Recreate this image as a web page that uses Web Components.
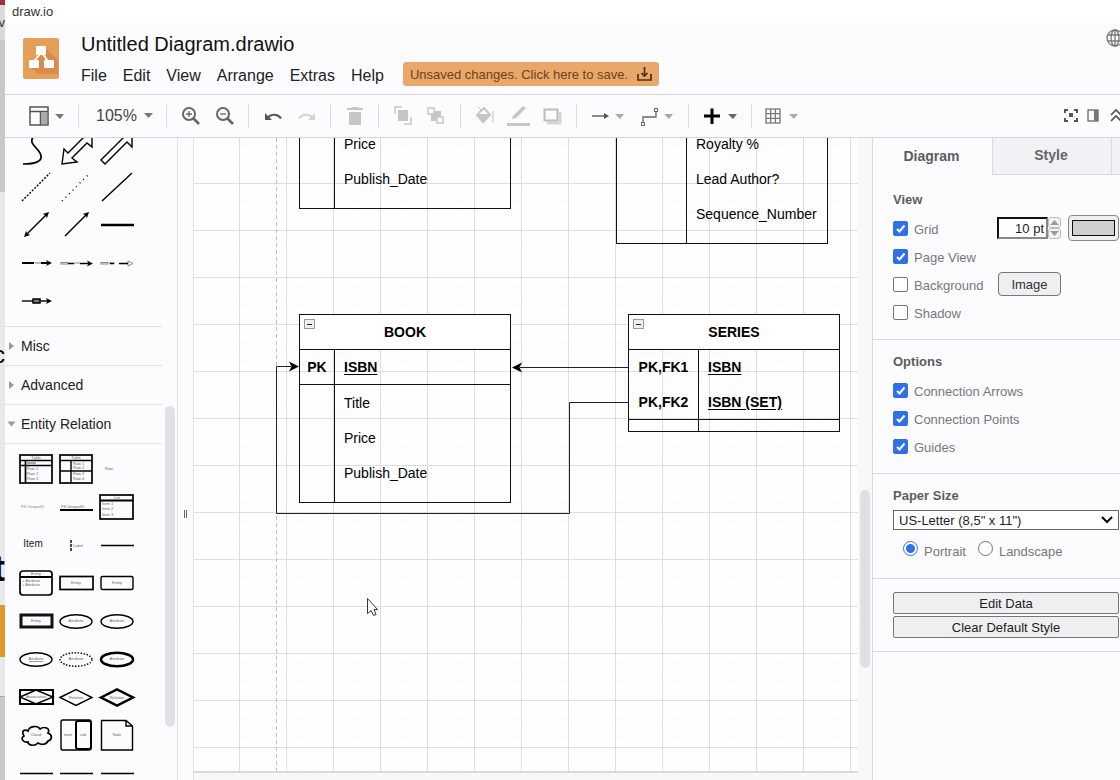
<!DOCTYPE html>
<html lang="en">
<head>
<meta charset="utf-8">
<title>draw.io</title>
<style>
html, body { margin: 0; height: 100%; overflow: hidden; }
body { font-family: "Liberation Sans", Arial, sans-serif; color: #111; background: #fcfcfe; }
</style>
</head>
<body>
<draw-app></draw-app>
<script>
const define = (name, html, setup) => customElements.define(name, class extends HTMLElement {
  constructor() {
    super();
    const t = document.createElement('template');
    t.innerHTML = '<style>*{box-sizing:border-box}button{font:inherit;color:inherit;cursor:pointer}svg{display:block}</style>' +
      (typeof html === 'function' ? html(this) : html);
    this.attachShadow({ mode: 'open' }).appendChild(t.content.cloneNode(true));
    if (setup) setup(this, this.shadowRoot);
  }
});

/* ---------- window behind the app ---------- */
define('back-window', `
<style>
:host { display: flex; flex-direction: column; overflow: hidden; background: #c9c9cb; color: #000; }
div { flex: none; overflow: hidden; white-space: nowrap; direction: rtl; }
.red { height: 5px; background: #99323d; }
.tab { height: 35px; background: #ddd8d6; font-size: 13px; line-height: 36px; color: #333; }
.bar { height: 152px; background: #c9c9cb; }
.page { height: 413px; background: #e9e8eb; }
.page .c { font-size: 24px; line-height: 22px; padding-top: 152px; }
.page .t { font-size: 36px; font-weight: bold; line-height: 40px; padding-top: 183px; }
.cta { height: 52px; background: #e0962a; }
.low { height: 40px; background: #e9e8eb; border-bottom: 1px solid #aaa; }
</style>
<div class="red"></div><div class="tab">v</div><div class="bar"></div>
<div class="page"><div class="c">c</div><div class="t">t</div></div>
<div class="cta"></div><div class="low"></div>`);

/* ---------- header ---------- */
define('app-header', `
<style>
:host { display: block; border-bottom: 1px solid #d6d6da; }
.win { height: 23px; padding-left: 7px; font-size: 13px; line-height: 23px; background: #fff; color: #333; }
.row { display: flex; height: 71px; padding: 9px 0 0 18px; }
.logo { margin-top: 6px; width: 37px; height: 41px; }
.main { flex: 1; margin-left: 21px; }
h1 { margin: 0; font-size: 20px; font-weight: normal; line-height: 24px; }
nav { display: flex; align-items: center; gap: 16px; height: 24px; margin-top: 8px; font-size: 16px; }
nav a { color: #222; text-decoration: none; }
button { display: flex; align-items: center; gap: 9px; height: 24px; margin: -4px 0 0 3px; padding: 0 7px; border: 0; border-radius: 3px; background: #e9a869; color: #6b4320; font-size: 13px; }
.globe { width: 14px; height: 20px; overflow: hidden; margin-top: -4px; }
</style>
<div class="win">draw.io</div>
<div class="row">
  <svg class="logo" viewBox="0 0 37 41"><rect width="36" height="41" rx="2" fill="#e69f59"/><path d="M22 10 L35 22 V36 H15 L7 29 Z" fill="#d98a4e"/>
  <path d="M17 16 L10 25 M20 16 L26 25" stroke="#fff" stroke-width="2"/><g fill="#fff"><rect x="13" y="8" width="10" height="9" rx="1"/><rect x="6" y="22" width="10" height="8" rx="1"/><rect x="21" y="22" width="10" height="8" rx="1"/></g></svg>
  <div class="main">
    <h1>Untitled Diagram.drawio</h1>
    <nav><a href="#">File</a><a href="#">Edit</a><a href="#">View</a><a href="#">Arrange</a><a href="#">Extras</a><a href="#">Help</a>
      <button>Unsaved changes. Click here to save.
        <svg width="15" height="15" viewBox="0 0 15 15" fill="none" stroke="#4d3018" stroke-width="2"><path d="M1 7 V13 H14 V7 M7.500 0 V9 M4.500 6 L7.500 9 L10.500 6" stroke-width="1.700"/></svg></button>
    </nav>
  </div>
  <svg class="globe" viewBox="0 0 14 20" fill="none" stroke="#777" stroke-width="1.300"><circle cx="9" cy="10" r="8"/><ellipse cx="9" cy="10" rx="4" ry="8"/><path d="M1.500 7 H16 M1.500 13 H16 M9 2 V18"/></svg>
</div>`);

/* ---------- toolbar ---------- */
const caret = (c, x = 36) => `<path d="M${x - 5} 15 H${x + 4} L${x} 20 Z" fill="${c}" stroke="none"/>`;
const tools = {
  layout: [49, `<g stroke="#555" stroke-width="1.500"><rect x="8" y="8" width="18" height="18"/><path d="M8 12.500 H26 M18.500 12.500 V26"/></g><rect x="19" y="13" width="6" height="12" fill="#aaa"/>` + caret('#777', 38)],
  zoomin: [34, `<g stroke="#666" stroke-width="2"><circle cx="16" cy="15" r="6"/><path d="M20.500 19.500 L26 25" stroke-width="2.600"/><path d="M13 15 H19 M16 12 V18" stroke-width="1.300"/></g>`],
  zoomout: [34, `<g stroke="#666" stroke-width="2"><circle cx="16" cy="15" r="6"/><path d="M20.500 19.500 L26 25" stroke-width="2.600"/><path d="M13 15 H19" stroke-width="1.300"/></g>`],
  undo: [34, `<path d="M10 14 V21 H17 L14.500 18.500 C17 16 22 16 25 20 L27 19 C24 14 17 13.500 13 17 Z" fill="#555"/>`],
  redo: [34, `<path d="M26 14 V21 H19 L21.500 18.500 C19 16 14 16 11 20 L9 19 C12 14 19 13.500 23 17 Z" fill="#d2d2d4"/>`],
  trash: [34, `<path d="M10 9 H14 L15 8 H21 L22 9 H26 V11 H10 Z M12 13 H24 V26 H12 Z" fill="#c6c6c8"/>`],
  front: [34, `<g stroke="#c6c6c8" stroke-width="1.500"><path d="M10 15 V8 H17 M26 18 V25 H19"/></g><rect x="13" y="11" width="10" height="11" fill="#c6c6c8"/>`],
  back: [34, `<rect x="12" y="12" width="10" height="10" fill="#c6c6c8"/><g stroke="#c6c6c8" stroke-width="1.500" fill="#fcfcfe"><rect x="9" y="9" width="6" height="6"/><rect x="18" y="18" width="6" height="6"/></g>`],
  fill: [34, `<path d="M11 8 L15 12 M17 8 L24 16 L16 24 L9 16 Z" fill="#c6c6c8" stroke="#c6c6c8"/><path d="M12 15 L17 10.500 L21 15 Z" fill="#fcfcfe"/><path d="M26 12 V24" stroke="#dedee0" stroke-width="2"/>`],
  line: [34, `<path d="M12 17 L22 7 L25 9 L15 19 L11 20 Z" fill="#c6c6c8"/><path d="M6 25.500 H29" stroke="#c6c6c8" stroke-width="3"/>`],
  shadow: [34, `<path d="M12 24 H25 V13" stroke="#d6d6d8" stroke-width="3"/><rect x="9.500" y="10.500" width="13" height="11" stroke="#bdbdbf" stroke-width="2" fill="#fcfcfe"/>`],
  arrow: [49, `<path d="M9 17 H23" stroke="#666" stroke-width="1.500"/><path d="M21 14 L26 17 L21 20 Z" fill="#555"/>` + caret('#aaa', 37)],
  route: [49, `<path d="M11 24 V18 H24 V13" stroke="#666" stroke-width="1.300"/><g stroke="#666" fill="#fff"><rect x="9.500" y="23.500" width="3" height="3"/><rect x="22.500" y="9.500" width="3" height="3"/></g>` + caret('#aaa', 37)],
  plus: [49, `<path d="M9 17 H25 M17 9.500 V25" stroke="#000" stroke-width="3"/>` + caret('#666', 38)],
  table: [49, `<g stroke="#777" stroke-width="1.300"><rect x="8" y="10" width="14" height="14"/><path d="M12.700 10 V24 M17.400 10 V24 M8 14.700 H22 M8 19.400 H22"/></g>` + caret('#aaa', 36)],
  full: [22, `<g stroke="#555" stroke-width="2"><path d="M5 14 V11 H8 M14 11 H17 V14 M17 19 V22 H14 M8 22 H5 V19"/></g><rect x="9" y="14" width="4" height="4" fill="#555"/>`],
  panel: [22, `<rect x="6" y="11" width="10" height="11" stroke="#666" stroke-width="1.300"/><rect x="12" y="11" width="4" height="11" fill="#777"/>`],
  fold: [22, `<path d="M7 16 L12 11 L17 16 M7 22 L12 17 L17 22" stroke="#555" stroke-width="1.700"/>`]
};
define('tool-button', el => {
  const k = el.getAttribute('icon'), [w, art] = tools[k];
  return `<style>:host{display:block;flex:none}button{display:block;border:0;padding:0;background:none}</style>
  <button aria-label="${k}"><svg width="${w}" height="34" viewBox="0 0 ${w} 34" fill="none">${art}</svg></button>`;
});
define('tool-group', `<style>
:host { display: flex; flex: none; align-items: center; padding: 0 7px 0 6px; height: 22px; border-right: 1px solid #dcdce0; }
:host(.last) { border: 0; }
</style><slot></slot>`);
define('tool-bar', `
<style>
:host { display: flex; align-items: center; height: 43px; padding-left: 11px; border-bottom: 1px solid #d6d6da; overflow: hidden; }
.zoom { display: flex; align-items: center; gap: 7px; border: 0; background: none; padding: 0 8px 0 11px; font-size: 16px; width: 74px; color: #444; white-space: nowrap; }
.zoom svg { flex: none; }
.end { display: flex; margin-left: auto; margin-right: -6px; flex: none; }
</style>
<tool-group><tool-button icon="layout"></tool-button></tool-group>
<tool-group><button class="zoom">105% <svg width="10" height="6"><path d="M0 0 H9 L4.500 5 Z" fill="#777"/></svg></button></tool-group>
<tool-group><tool-button icon="zoomin"></tool-button><tool-button icon="zoomout"></tool-button></tool-group>
<tool-group><tool-button icon="undo"></tool-button><tool-button icon="redo"></tool-button></tool-group>
<tool-group><tool-button icon="trash"></tool-button></tool-group>
<tool-group><tool-button icon="front"></tool-button><tool-button icon="back"></tool-button></tool-group>
<tool-group><tool-button icon="fill"></tool-button><tool-button icon="line"></tool-button><tool-button icon="shadow"></tool-button></tool-group>
<tool-group><tool-button icon="arrow"></tool-button><tool-button icon="route"></tool-button></tool-group>
<tool-group><tool-button icon="plus"></tool-button></tool-group>
<tool-group class="last"><tool-button icon="table"></tool-button></tool-group>
<div class="end"><tool-button icon="full"></tool-button><tool-button icon="panel"></tool-button><tool-button icon="fold"></tool-button></div>`);

/* ---------- shape thumbnails, each on a 40 x 38 cell ---------- */
const tx = (x, y, s, a = 'middle') => `<text x="${x}" y="${y}" text-anchor="${a}" font-size="4" fill="#666" stroke="none">${s}</text>`;
const ell = (extra, lab = 'Attribute') => `<ellipse cx="20" cy="19.500" rx="16" ry="6.700" ${extra}/>` + tx(20, 20, lab);
const head = (x, y, r) => `<path d="M0 0 L-6 -3 L-4.500 0 L-6 3 Z" transform="translate(${x} ${y}) rotate(${r})" fill="#000" stroke="none"/>`;
const shapes = {
  curve: `<path d="M17 8 C12 16 24 19 25 27 C26 32 20 35 7 35" stroke-width="1.700"/>`,
  biarrow: `<path d="M6 35 L8 20 L12 24 L28 8 L25 5 L36 1 V18 L31 14 L16 29 L21 33 Z"/>`,
  bigarrow: `<path d="M4 31 L26 9 L23 6 L35 1 V18 L30 13 L8 35 Z"/>`,
  dashed: `<path d="M6 34 L34 6" stroke-dasharray="2 1.500"/>`,
  dotted: `<path d="M6 34 L34 6" stroke-dasharray="1 4"/>`,
  diag: `<path d="M5 34 L35 6"/>`,
  both: `<path d="M10 30 L31 9"/>` + head(33, 7, -45) + head(8, 32, 135),
  one: `<path d="M9 31 L31 9"/>` + head(33, 7, -45),
  thick: `<path d="M4 20 H37" stroke-width="2.500"/>`,
  l1: `<path d="M6 20 H18 M25 20 H33" stroke-width="2"/><path d="M19 20 H25" stroke="#999"/>` + head(36, 20, 0),
  l2: `<rect x="5" y="19.500" width="7" height="1.500" stroke="#888" stroke-width="1"/><path d="M12 20.500 H18 M24 20.500 H33" stroke-width="1.700"/><path d="M18 20 H24" stroke="#aaa"/>` + head(37, 20.5, 0),
  l3: `<g stroke="#888" stroke-width="1"><rect x="4" y="19.500" width="7" height="1.500"/><path d="M12 20 H18 M31 18 L36 20.500 L31 23 Z"/></g><path d="M13 20.500 H17 M22 20.500 H31" stroke-width="1.700"/>`,
  l4: `<path d="M6 20 H33"/><rect x="17" y="18" width="7" height="4" fill="#777" stroke-width="1.500"/>` + head(36, 20, 0),
  t1: `<rect x="4" y="5" width="32" height="28" stroke-width="1.700"/><path d="M4 10.500 H36 M4 15.500 H36 M9.500 10.500 V33" stroke-width="1.700"/>` + tx(20, 9, 'Table') + `<path d="M11 13 H20" stroke="#555" stroke-width="1"/>` + tx(11, 20, 'Row 1', 'start') + tx(11, 25, 'Row 2', 'start') + tx(11, 30, 'Row 3', 'start'),
  t2: `<rect x="4" y="5" width="32" height="28" stroke-width="1.700"/><path d="M4 10.500 H36 M4 21 H36 M15 10.500 V33"/>` + tx(20, 9, 'Table') + tx(17, 15, 'Row 1', 'start') + tx(17, 19, 'Row 2', 'start') + tx(17, 25, 'Row 3', 'start') + tx(17, 30, 'Row 4', 'start'),
  row: tx(12, 20, 'Row', 'middle'),
  pk: tx(5, 20, 'PK UniqueID', 'start').replace('#666', '#888'),
  pkline: `<path d="M4 22 H37" stroke-width="2"/>` + tx(5, 20, 'PK UniqueID', 'start'),
  list: `<rect x="3" y="7" width="33" height="24" stroke-width="1.700"/><path d="M3 12.500 H36" stroke-width="2"/>` + tx(20, 11, 'List') + tx(5, 17, 'Item 1', 'start') + tx(5, 22, 'Item 2', 'start') + tx(5, 28, 'Item 3', 'start'),
  item: `<text x="17" y="21" text-anchor="middle" font-size="10" fill="#222" stroke="none">Item</text>`,
  vlabel: `<path d="M15 14 V26" stroke-dasharray="3 1"/>` + tx(17, 21, 'Label', 'start'),
  hline: `<path d="M4 19.500 H37" stroke-width="1.700"/>`,
  ent1: `<rect x="4" y="7" width="32" height="24" rx="3" stroke-width="1.700"/><path d="M4 13 H36" stroke-width="2"/>` + tx(20, 11, 'Entity') + tx(6, 18, '+ Attribute', 'start') + tx(6, 22, '+ Attribute', 'start'),
  ent2: `<rect x="4" y="12.500" width="33" height="13" stroke-width="1.700"/>` + tx(20, 20, 'Entity'),
  ent3: `<rect x="4" y="12.500" width="32" height="13" rx="1.500"/>` + tx(20, 20, 'Entity'),
  weak: `<rect x="5" y="13" width="31" height="12" stroke-width="3" stroke="#111"/>` + tx(20, 20, 'Entity'),
  a1: ell(''), a2: ell('') + `<path d="M13 21.500 H27" stroke="#999" stroke-width="1"/>`,
  a3: ell('stroke-dasharray="1.500 1.500"'), a4: ell('stroke-width="2.500"'),
  rel1: `<rect x="4" y="12" width="33" height="14" stroke-width="2"/><path d="M4 19 L20 12 L37 19 L20 26 Z"/>` + tx(20, 20, 'Associative'),
  rel2: `<path d="M4 19.500 L20 11.500 L36 19.500 L20 27.500 Z"/>` + tx(20, 21, 'Relation'),
  rel3: `<path d="M4 19.500 L20 11.500 L36 19.500 L20 27.500 Z" stroke-width="2.500"/>` + tx(20, 21, 'Relation'),
  cloud: `<path d="M12 15 C13 10 22 9 24 13 C28 10 35 12 32 17 C37 19 36 24 32 25 C30 29 25 29 22 27 C18 31 12 29 12 26 C7 27 4 22 8 20 C5 15 8 13 12 15 Z" stroke-width="1.700"/>` + tx(20, 20, 'Cloud'),
  split: `<rect x="5" y="4" width="30" height="30" rx="2"/><rect x="20" y="5" width="15" height="28" rx="2" stroke-width="2"/>` + tx(12, 20, 'main') + tx(27, 20, 'sub'),
  note: `<path d="M4.500 4.500 H29 L35.500 10 V34 H4.500 Z M29 4.500 V10 H35"/>` + tx(20, 20, 'Note')
};
define('shape-thumb', el => `<style>:host{display:block;height:38px}button{display:block;border:0;padding:0;background:none}</style>
<button aria-label="${el.getAttribute('kind')}"><svg width="40" height="38" viewBox="0 0 40 38" fill="none" stroke="#000" stroke-width="1.400" font-family="Liberation Sans, sans-serif">${shapes[el.getAttribute('kind')]}</svg></button>`);
const thumbs = list => list.split(' ').map(k => `<shape-thumb kind="${k}"></shape-thumb>`).join('');

define('shape-section', el => `
<style>
:host { display: block; border-bottom: 1px solid #e2e2e5; width: 157px; }
button { display: flex; align-items: center; gap: 6px; width: 100%; height: 38px; border: 0; background: none; padding: 0 0 0 3px; font-size: 14px; text-align: left; color: #222; white-space: nowrap; }
svg { flex: none; }
:host([open]) svg { transform: rotate(90deg); }
</style>
<button aria-expanded="${el.hasAttribute('open')}"><svg width="7" height="10"><path d="M1 1 L6 5 L1 9 Z" fill="#999"/></svg><slot></slot></button>`);

define('shape-sidebar', `
<style>
:host { display: block; position: relative; overflow: hidden; border-right: 1px solid #e2e2e5; }
.grid { display: grid; grid-template-columns: 40px 41px 40px; grid-auto-rows: 38px; padding: 6px 0 0 11px; }
.first { margin-top: -15px; padding-bottom: 7px; width: 157px; border-bottom: 1px solid #e2e2e5; }
.thumb { position: absolute; top: 268px; right: 2px; width: 10px; height: 321px; border-radius: 5px; background: #e2e0e4; }
</style>
<div class="grid first">${thumbs('curve biarrow bigarrow dashed dotted diag both one thick l1 l2 l3 l4')}</div>
<shape-section>Misc</shape-section>
<shape-section>Advanced</shape-section>
<shape-section open>Entity Relation</shape-section>
<div class="grid">${thumbs('t1 t2 row pk pkline list item vlabel hline ent1 ent2 ent3 weak a1 a1 a2 a3 a4 rel1 rel2 rel3 cloud split note hline hline hline')}</div>
<div class="thumb"></div>`);

/* ---------- diagram ---------- */
define('er-table', el => {
  const title = el.getAttribute('caption'), rows = JSON.parse(el.getAttribute('rows'));
  return `<style>
:host { display: block; position: absolute; width: 212px; font-size: 14px; color: #000; }
table { width: 100%; border-collapse: collapse; table-layout: fixed; border: 1px solid #111; }
col:first-child { width: ${el.getAttribute('key')}px; }
th, td { height: 35px; padding: 0 9px; line-height: 20px; text-align: left; font-weight: normal; white-space: nowrap; }
tbody th { padding: 0; text-align: center; border-right: 1px solid #111; }
thead th { background: #fff; font-weight: bold; text-align: center; border-bottom: 1px solid #111; }
.pk > * { font-weight: bold; }
.pk td { text-decoration: underline; text-underline-offset: 2px; }
.rule > * { border-bottom: 1px solid #111; }
.tall > * { height: 36px; }
.pad > * { height: 12px; line-height: 0; }
.fold { position: absolute; top: 5px; left: 5px; width: 11px; height: 10px; padding: 0; border: 1px solid #999; background: #eee; display: grid; place-items: center; }
.fold i { width: 5px; height: 1px; background: #222; }
</style>
<table><colgroup><col><col></colgroup>
${title ? `<thead><tr><th colspan="2">${title}</th></tr></thead>` : ''}
<tbody>${rows.map(([k, v, c]) => `<tr class="${c || ''}"><th>${k}</th><td>${v}</td></tr>`).join('')}<tr class="pad"><th></th><td></td></tr></tbody></table>
${title ? '<button class="fold" aria-label="collapse"><i></i></button>' : ''}`;
});

define('diagram-canvas', `
<style>
:host { display: flex; background: #f8f8f9; border-left: 1px solid #e2e2e5; min-width: 0; overflow: hidden; }
.page { position: relative; flex: 1; min-width: 0; height: calc(100% - 7px); overflow: hidden; background: #fefeff; border-bottom: 2px solid #dadadd; }
.page > svg { position: absolute; inset: 0; width: 100%; height: 100%; }
.t1 { left: 105px; top: -12px; } .t2 { left: 422px; top: -12px; }
.book { left: 105px; top: 176px; } .series { left: 434px; top: 176px; }
.cursor { pointer-events: none; }
.bar { flex: none; width: 15px; position: relative; border-right: 1px solid #d9d9dd; }
.bar i { position: absolute; top: 352px; left: 2px; width: 10px; height: 178px; border-radius: 5px; background: #e0dfe3; }
</style>
<div class="page">
  <svg aria-hidden="true">
    <defs><pattern id="g" x="45" y="-2" width="47" height="47" patternUnits="userSpaceOnUse">
      <path d="M9.500 0 V47 M18.500 0 V47 M28.500 0 V47 M37.500 0 V47 M0 9.500 H47 M0 18.500 H47 M0 28.500 H47 M0 37.500 H47" stroke="#fafafc"/>
      <path d="M.500 0 V47 M0 .500 H47" stroke="#dedee1"/></pattern></defs>
    <rect width="100%" height="100%" fill="url(#g)"/>
    <line x1="82.500" y1="0" x2="82.500" y2="100%" stroke="#c0c0c4" stroke-dasharray="4 3"/>
  </svg>
  <er-table class="t1" key="35" rows='[["","Price"],["","Publish_Date"]]'></er-table>
  <er-table class="t2" key="70" rows='[["","Royalty %"],["","Lead Author?"],["","Sequence_Number"]]'></er-table>
  <er-table class="book" key="35" caption="BOOK" rows='[["PK","ISBN","pk rule"],["","Title","tall"],["","Price"],["","Publish_Date"]]'></er-table>
  <er-table class="series" key="70" caption="SERIES" rows='[["PK,FK1","ISBN","pk"],["PK,FK2","ISBN (SET)","pk rule"]]'></er-table>
  <svg class="cursor" fill="none" stroke="#222">
    <path d="M434 229.500 H326 M434 264.500 H375.500 V375.500 H82.500 V228.500 H97"/>
    <path d="M318 229.500 L328 224.500 L325.500 229.500 L328 234.500 Z M105 228.500 L95 223.500 L97.500 228.500 L95 233.500 Z" fill="#000" stroke="none"/>
    <path d="M173.500 460.500 V475.500 L177 472.500 L179.500 477.500 L182 476.500 L180 471.500 H183.500 Z" fill="#fff" stroke="#334"/>
  </svg>
</div>
<div class="bar"><i></i></div>`);

/* ---------- format panel ---------- */
const controlCss = `
input[type=checkbox] { appearance: none; flex: none; width: 15px; height: 15px; margin: 0; border: 1px solid #777; border-radius: 2px; background: #fff; }
input[type=checkbox]:checked { border-color: #2f6fe8; background: #2f6fe8 url("data:image/svg+xml,%3Csvg xmlns='http://www.w3.org/2000/svg' viewBox='0 0 13 13'%3E%3Cpath d='M3 7 L5.500 9.500 L10.500 3.500' fill='none' stroke='white' stroke-width='2'/%3E%3C/svg%3E"); }`;
define('check-row', el => `
<style>${controlCss}
:host { display: flex; align-items: center; height: 28px; }
div { display: flex; align-items: center; gap: 6px; width: 104px; white-space: nowrap; }
label { padding-top: 3px; }
</style><div><input type="checkbox" id="c" ${el.hasAttribute('checked') ? 'checked' : ''}><label for="c">${el.getAttribute('label')}</label></div><slot></slot>`);
define('panel-section', el => `
<style>
:host { display: block; padding: 13px 1px 13px 20px; border-bottom: 1px solid #d9d9dd; }
h2 { margin: 0 0 7px; font-size: 13px; line-height: 17px; height: 16px; color: #5c5c60; }
</style>${el.hasAttribute('heading') ? `<h2>${el.getAttribute('heading')}</h2>` : ''}<slot></slot>`);
define('format-panel', `
<style>
:host { display: block; font-size: 13px; color: #77777b; overflow: hidden; }
.tabs { display: flex; height: 40px; font-weight: bold; font-size: 14px; color: #66666a; }
.tabs button { width: 119px; height: 37px; padding: 0 2px 2px 0; border: 0; }
.tabs .on { background: none; color: #5c5c60; }
.tabs .off { border: 1px solid #d9d9dd; border-width: 0 0 1px 1px; background: #f2f2f4; }
.tabs .rest { flex: 1; height: 37px; border: 1px solid #d9d9dd; border-width: 0 0 1px 1px; background: #f2f2f4; }
.size { width: 51px; height: 22px; border: 2px solid #888; border-top-color: #111; border-left-color: #111; padding: 0 2px; font: inherit; text-align: right; color: #222; background: #fff; }
.spin { display: flex; flex-direction: column; width: 13px; height: 22px; margin-right: 7px; }
.spin button { flex: 1; border: 1px solid #bbb; border-radius: 3px; background: #f4f4f5; padding: 0; display: grid; place-items: center; }
.color { width: 51px; height: 26px; padding: 3px; border: 1px solid #888; border-radius: 4px; background: #efeff1; }
.color i { display: block; height: 16px; border: 1px solid #111; background: #cfcfd1; }
.image { width: 63px; height: 24px; margin-left: 1px; border: 1px solid #777; border-radius: 4px; background: #efeff1; color: #333; padding: 0; }
select { display: block; width: 100%; height: 20px; appearance: none; border: 1px solid #666; border-radius: 0; padding: 0 5px; font: inherit; color: #222; background: #fff url("data:image/svg+xml,%3Csvg xmlns='http://www.w3.org/2000/svg' width='12' height='8'%3E%3Cpath d='M1 1 L6 6 L11 1' fill='none' stroke='black' stroke-width='2'/%3E%3C/svg%3E") no-repeat right 5px center; }
.radios { display: flex; align-items: center; height: 28px; margin-top: 7px; padding-left: 10px; }
.radios input { appearance: none; width: 15px; height: 15px; margin: 0 6px 5px 0; border: 1px solid #777; border-radius: 50%; background: #fff; }
.radios input:checked { border-color: #2f6fe8; background: radial-gradient(circle, #2f6fe8 4px, #fff 5px); }
.radios label { margin-right: 12px; }
.wide { display: block; width: 100%; height: 22px; border: 1px solid #777; border-radius: 2px; background: #efeff1; color: #222; padding: 0; }
.wide + .wide { margin-top: 2px; }
</style>
<div class="tabs"><button class="on">Diagram</button><button class="off">Style</button><div class="rest"></div></div>
<panel-section heading="View">
  <check-row label="Grid" checked><input class="size" aria-label="Grid size" value="10 pt">
    <div class="spin"><button aria-label="up"><svg width="9" height="5"><path d="M0 5 L4.500 0 L9 5 Z" fill="#999"/></svg></button><button aria-label="down"><svg width="9" height="5"><path d="M0 0 L4.500 5 L9 0 Z" fill="#999"/></svg></button></div>
    <button class="color" aria-label="Grid color"><i></i></button></check-row>
  <check-row label="Page View" checked></check-row>
  <check-row label="Background"><button class="image">Image</button></check-row>
  <check-row label="Shadow"></check-row>
</panel-section>
<panel-section heading="Options">
  <check-row label="Connection Arrows" checked></check-row>
  <check-row label="Connection Points" checked></check-row>
  <check-row label="Guides" checked></check-row>
</panel-section>
<panel-section heading="Paper Size">
  <select aria-label="Paper Size"><option>US-Letter (8,5" x 11")</option></select>
  <div class="radios"><input type="radio" name="o" id="p" checked><label for="p">Portrait</label><input type="radio" name="o" id="l"><label for="l">Landscape</label></div>
</panel-section>
<panel-section><button class="wide">Edit Data</button><button class="wide">Clear Default Style</button></panel-section>`);

/* ---------- shell ---------- */
define('draw-app', `
<style>
:host { display: grid; grid-template-columns: 5px minmax(0, 1fr); height: 100vh; }
.app { display: flex; flex-direction: column; min-height: 0; background: #fcfcfe; }
.body { flex: 1; min-height: 0; display: grid; grid-template-columns: 173px 15px minmax(0, 1fr) 247px; grid-template-rows: minmax(0, 1fr); }
.split { display: flex; justify-content: center; gap: 1px; padding-top: 372px; }
.split i { width: 1px; height: 8px; background: #666; }
</style>
<back-window></back-window>
<div class="app">
  <app-header></app-header>
  <tool-bar></tool-bar>
  <div class="body">
    <shape-sidebar></shape-sidebar>
    <div class="split"><i></i><i></i></div>
    <diagram-canvas></diagram-canvas>
    <format-panel></format-panel>
  </div>
</div>`);
</script>
</body>
</html>
